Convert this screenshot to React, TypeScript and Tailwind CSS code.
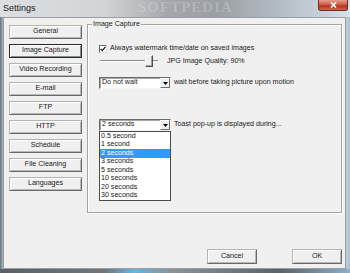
import React from "react";

const font = "font-['Liberation_Sans',Arial,sans-serif]";

function NavButton({ label, selected }: { label: string; selected?: boolean }) {
  return (
    <div
      className={
        selected
          ? "h-[14px] flex items-center justify-center border border-[#2a2a2a] shadow-[inset_1px_1px_0_#ffffff,inset_-1px_-1px_0_#8a8a8a] text-[7.1px] leading-none text-[#1a1a1a]"
          : "h-[14px] flex items-center justify-center border border-t-[#b4b4b4] border-l-[#b4b4b4] border-b-[#6a6a6a] border-r-[#6a6a6a] shadow-[inset_1px_1px_0_#ffffff,inset_-1px_-1px_0_#b8b8b8] text-[7.1px] leading-none text-[#1a1a1a]"
      }
    >
      {label}
    </div>
  );
}

function Combo({ value, children }: { value: string; children?: React.ReactNode }) {
  return (
    <div className="relative w-[72px] h-[12px] shrink-0">
      <div className="h-full flex items-center bg-white border border-t-[#6a6a6a] border-l-[#6a6a6a] border-b-[#f4f4f4] border-r-[#f4f4f4] shadow-[inset_1px_1px_0_#a8a8a8]">
        <span className="flex-1 pl-[2px] text-[7.1px] leading-none text-[#1a1a1a] whitespace-nowrap">{value}</span>
        <div className="w-[10px] h-full flex items-center justify-center bg-[#f0f0f0] border border-t-[#ffffff] border-l-[#ffffff] border-b-[#6a6a6a] border-r-[#6a6a6a]">
          <svg width="5" height="3" viewBox="0 0 5 3">
            <polygon points="0,0 5,0 2.5,3" fill="#000" />
          </svg>
        </div>
      </div>
      {children}
    </div>
  );
}

const items = ["0.5 second", "1 second", "2 seconds", "3 seconds", "5 seconds", "10 seconds", "20 seconds", "30 seconds"];

export default function App() {
  return (
    <div className={`${font} w-[350px] h-[273px] flex flex-col overflow-hidden bg-[#9aa6ae]`}>
      {/* Title bar */}
      <div className="relative h-[17px] shrink-0 bg-[linear-gradient(90deg,#dcdfe1_0%,#d2d5d7_30%,#a3a7ab_48%,#9b9fa3_62%,#b4bcc4_80%,#d6e0ea_100%)] flex items-center pl-[3px]">
        <span className="text-[9px] leading-none text-[#1a1a1a]">Settings</span>
        <span className="absolute left-[138px] top-[0px] text-[15px] leading-none font-bold tracking-[1px] text-white/20 blur-[0.6px] font-['Liberation_Serif',serif]">SOFTPEDIA</span>
        <div className="absolute right-[2px] top-0 w-[30px] h-[11px] rounded-b-[3px] border border-t-0 border-[#6b2a22] bg-[linear-gradient(180deg,#e8a093_0%,#d05a45_45%,#b8321e_60%,#d06a50_100%)] flex items-center justify-center">
          <svg width="7" height="6" viewBox="0 0 7 6">
            <path d="M1 0.5 L6 5.5 M6 0.5 L1 5.5" stroke="#ffffff" strokeWidth="1.6" />
          </svg>
        </div>
      </div>

      <div className="flex flex-1">
        {/* left frame */}
        <div className="w-[3px] bg-[linear-gradient(90deg,#5f7882_0%,#8b979e_60%,#b6bcc0_100%)]" />
        {/* client */}
        <div className="flex-1 flex flex-col bg-[#f0f0f0] border border-[#9a9ea2]">
          <div className="flex pt-[6px] pl-[5px]">
            <div className="w-[73px] mt-[1px] flex flex-col gap-[5px]">
              <NavButton label="General" />
              <NavButton label="Image Capture" selected />
              <NavButton label="Video Recording" />
              <NavButton label="E-mail" />
              <NavButton label="FTP" />
              <NavButton label="HTTP" />
              <NavButton label="Schedule" />
              <NavButton label="File Cleaning" />
              <NavButton label="Languages" />
            </div>

            {/* group box */}
            <div className="relative ml-[5px] w-[255px] h-[189px] border border-[#a4a4a4] shadow-[inset_1px_1px_0_#ffffff,1px_1px_0_#ffffff] flex flex-col pl-[11px] text-[7.1px] leading-none text-[#1a1a1a]">
              <span className="absolute -top-[4px] left-[4px] px-[1px] bg-[#f0f0f0] text-[7.1px] leading-none text-[#1a1a1a]">Image Capture</span>

              {/* checkbox row */}
              <div className="mt-[19px] h-[10px] flex items-center">
                <div className="w-[8px] h-[8px] bg-white border border-t-[#6a6a6a] border-l-[#6a6a6a] border-b-[#dcdcdc] border-r-[#dcdcdc] flex items-center justify-center">
                  <svg width="6" height="6" viewBox="0 0 6 6">
                    <path d="M0.6 2.8 L2.3 4.6 L5.4 0.8" stroke="#111" strokeWidth="1.2" fill="none" />
                  </svg>
                </div>
                <span className="ml-[3px] whitespace-nowrap">Always watermark time/date on saved images</span>
              </div>

              {/* slider row */}
              <div className="h-[14px] flex items-center pl-[1px]">
                <div className="relative w-[58px] h-[14px]">
                  <div className="absolute left-0 right-0 top-[6px] h-[2px] border-t border-t-[#8a8a8a] border-b border-b-[#ffffff]" />
                  <div className="absolute left-[45px] top-[1px] w-[8px] h-[12px] bg-[#f0f0f0] border border-t-[#ffffff] border-l-[#ffffff] border-b-[#505050] border-r-[#505050] shadow-[inset_-1px_-1px_0_#a0a0a0]" />
                </div>
                <span className="ml-[9px] pt-[2px] whitespace-nowrap">JPG Image Quality: 90%</span>
              </div>

              {/* wait row */}
              <div className="mt-[9px] flex items-center">
                <Combo value="Do not wait" />
                <span className="ml-[3px] whitespace-nowrap">wait before taking picture upon motion</span>
              </div>

              {/* toast row */}
              <div className="mt-[30px] flex items-center">
                <Combo value="2 seconds">
                  <div className="absolute left-0 top-[12px] w-[72px] bg-white border border-[#4a4a4a] flex flex-col z-10">
                    {items.map((it) => (
                      <div
                        key={it}
                        className={
                          it === "2 seconds"
                            ? "h-[8.5px] flex items-center pl-[1px] bg-[#3399ff] text-white text-[7.1px] leading-none"
                            : "h-[8.5px] flex items-center pl-[1px] text-[#1a1a1a] text-[7.1px] leading-none"
                        }
                      >
                        {it}
                      </div>
                    ))}
                  </div>
                </Combo>
                <span className="ml-[3px] whitespace-nowrap">Toast pop-up is displayed during...</span>
              </div>
            </div>
          </div>

          {/* bottom buttons */}
          <div className="mt-auto flex justify-end gap-[35px] pr-[3px] pb-[4px]">
            <div className="w-[50px] h-[15px] flex items-center justify-center border border-t-[#b4b4b4] border-l-[#b4b4b4] border-b-[#6a6a6a] border-r-[#6a6a6a] shadow-[inset_1px_1px_0_#ffffff,inset_-1px_-1px_0_#b8b8b8] text-[7.1px] leading-none text-[#1a1a1a]">
              Cancel
            </div>
            <div className="w-[50px] h-[15px] flex items-center justify-center border border-t-[#b4b4b4] border-l-[#b4b4b4] border-b-[#6a6a6a] border-r-[#6a6a6a] shadow-[inset_1px_1px_0_#ffffff,inset_-1px_-1px_0_#b8b8b8] text-[7.1px] leading-none text-[#1a1a1a]">
              OK
            </div>
          </div>
        </div>
        {/* right frame */}
        <div className="w-[4px] bg-[linear-gradient(90deg,#c4ccd2_0%,#a9c4da_100%)]" />
      </div>
      {/* bottom frame */}
      <div className="h-[4px] shrink-0 bg-[linear-gradient(90deg,#5a6064_0%,#70767a_30%,#6ab4d8_38%,#8a9096_50%,#5c6266_80%,#8ab0cc_100%)]" />
    </div>
  );
}
